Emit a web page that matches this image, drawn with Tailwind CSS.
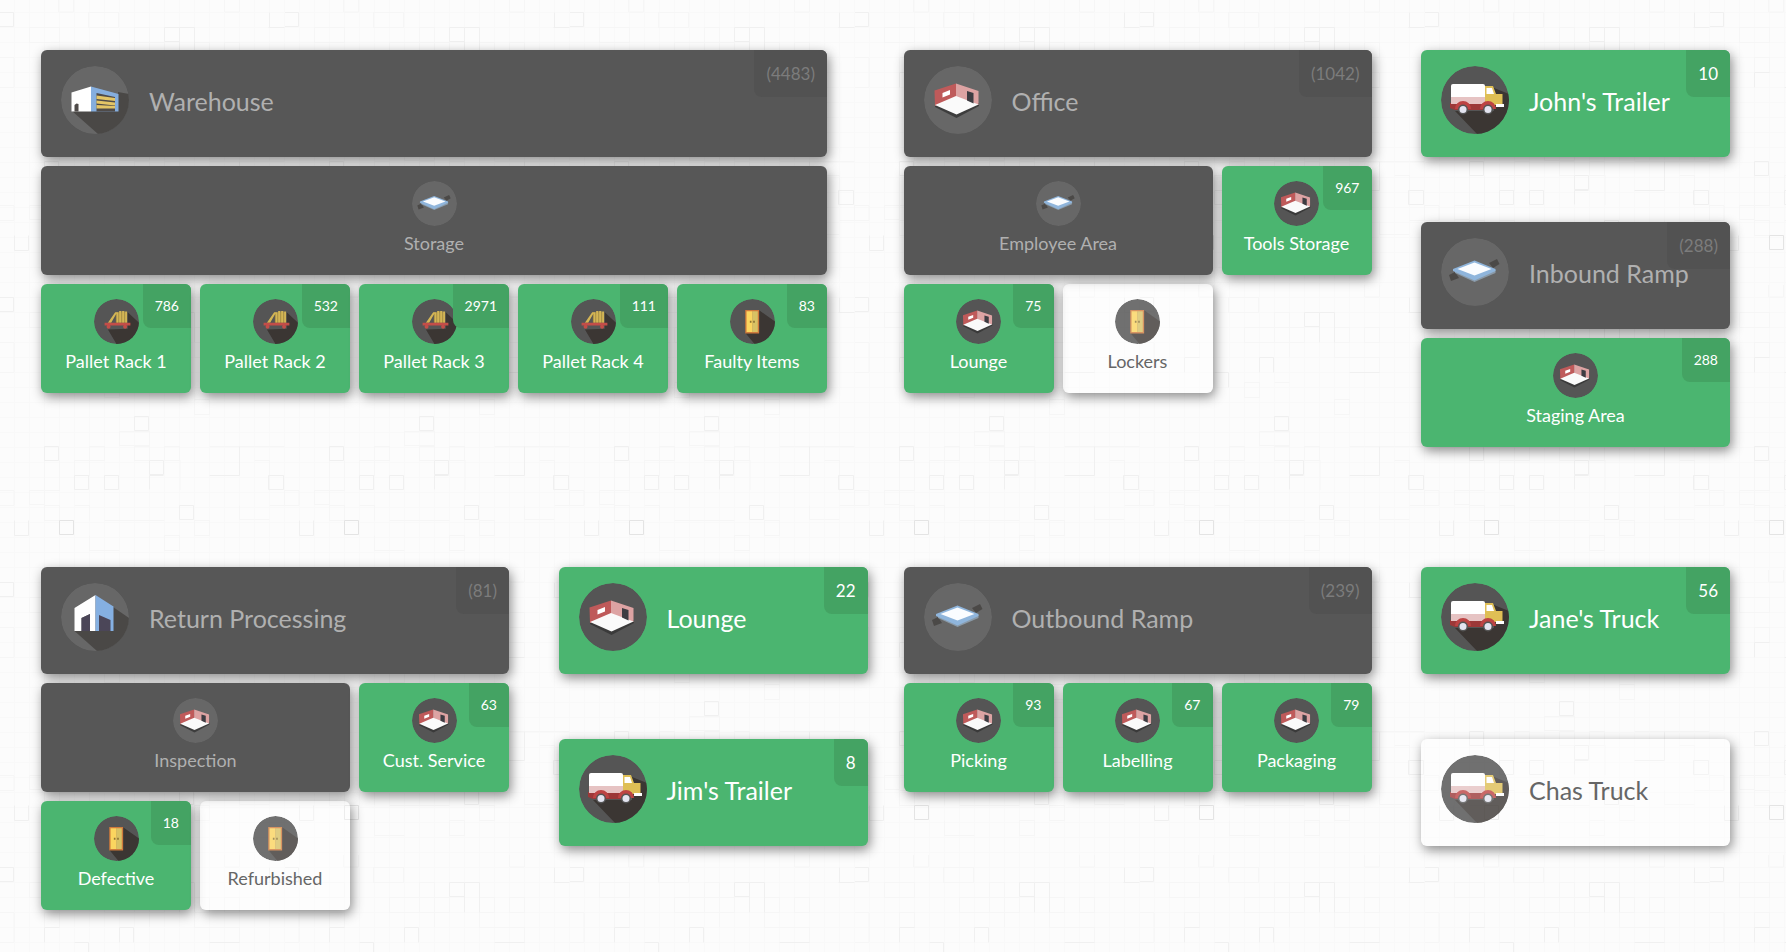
<!DOCTYPE html>
<html lang="en">
<head>
    <meta charset="UTF-8">
    <meta name="viewport" content="width=device-width, initial-scale=1.0">
    <title>Locations</title>
    <script src="https://cdn.jsdelivr.net/npm/@tailwindcss/browser@4"></script>
</head>
<body class="relative min-h-screen bg-[#fcfcfc] font-[Lato,'Open_Sans',sans-serif]">
    <!-- Paper texture -->
    <svg class="absolute inset-0 -z-10 h-full w-full" aria-hidden="true">
        <defs>
            <pattern id="grid" x="-1" y="-3" width="15" height="15" patternUnits="userSpaceOnUse">
                <path d="M0 .5H15M.5 0V15" stroke="#f9f9f9" fill="none"/>
            </pattern>
            <pattern id="paper" width="285" height="285" patternUnits="userSpaceOnUse">
                <g fill="none" stroke="#f6f6f6">
                    <path d="M29.5 27.5h30v15h-30zM104.5 42.5h30v15h-30zM149.5 42.5h15v15h-15zM194.5 42.5h15v15h-15zM224.5 42.5h15v15h-15zM44.5 57.5h15v15h-15zM134.5 27.5h15v15h-15zM0 57.5h14v30h-14M104.5 57.5h45v15M194.5 57.5v15h45v15M58.5 0v12h15v-12M194.5 114.5h15v15h-15zM224.5 0v12h15v-12M88.5 12.5h30v15h-30z"/>
                    <path d="M119.5 146.5h30v14h-30zM74.5 175.5h15v15h-15zM89.5 161.5h15v14h-15zM44.5 175.5v30h15v-30M134.5 161.5h15v14h-15zM164.5 161.5h15v14h-15zM254.5 175.5h15v30M29.5 205.5h15v14h-15zM44.5 220.5h15v15h-15zM74.5 220.5h15v15M104.5 235.5h60M164.5 250.5h15v15h-15zM194.5 235.5h15v15h-15zM89.5 250.5v15h30M209.5 161.5h75M284.5 205.5v15h-15M0 205.5h14v15h-14M314 205.5h-30M104.5 97.5h15v15h-15zM134.5 97.5h15M180 175v30M239.5 220.5v14h30"/>
                </g>
                <g fill="none" stroke="#f0f0f0">
                    <path d="M0 12.5h13.5v14h-14M164.5 27.5h15v14h-15zM179.5 57.5v-30h15M194.5 27.5v30M44.5 87.5v-15h15M119.5 87.5v-15h14v15M74.5 87.5h14v15M209.5 87.5h30M268.5 27.5h16M269.5 12.5v15"/>
                    <path d="M44.5 161.5h14v14h-14zM134.5 131.5h14v14h-14zM149.5 175.5h14v14h-14zM149.5 204.5v-14h14M74.5 190.5h14v14h-14zM104.5 190.5h14v14h-14zM209.5 190.5h30M268.5 190.5h15v14h-15zM239.5 161.5v29M14.5 235.5v15h14v-15M179.5 220.5h14v14h-14z"/>
                </g>
                <path d="M59.5 235.5h14v14h-14z" fill="none" stroke="#e4e4e4"/>
            </pattern>
        </defs>
        <rect width="100%" height="100%" fill="url(#grid)"/>
        <rect width="100%" height="100%" fill="url(#paper)"/>
    </svg>

    <!-- Icon set, each one is cut to a disc by rounded-full where it is used -->
    <svg class="hidden" aria-hidden="true">
        <symbol id="warehouse" viewBox="0 0 68 68">
            <circle cx="34" cy="34" r="34" fill="currentColor"/>
            <path d="M11 45L37 68H68V28L57 26V45Z" fill="#4a4846"/>
            <path d="M10.5 26.5L30 20.5V45.5H10.5Z" fill="#fff"/>
            <path d="M13.5 45.5V39L15.5 37.5L17.5 38V45.5Z" fill="#4f4b49"/>
            <path d="M30 20.5L57.5 28V45.5H30Z" fill="#85aede"/>
            <path d="M35.5 27L54 31V45.5H35.5Z" fill="#4f4b49"/>
            <path d="M35.5 29.5L54 32V35L35.5 33ZM35.5 34.5L54 36.5V39.5L35.5 37.5ZM35.5 39L54 40V42.5H35.5Z" fill="#e3c566"/>
        </symbol>
        <symbol id="house" viewBox="0 0 68 68">
            <circle cx="34" cy="34" r="34" fill="currentColor"/>
            <path d="M13.5 48L36 68H68V35L52 24V48Z" fill="#4a4846"/>
            <path d="M13.5 25L34.5 12V48H29V31L20.5 35V48H13.5Z" fill="#fff"/>
            <path d="M20.5 35L29 31V48H20.5Z" fill="#4b4658"/>
            <path d="M34.5 12L52.5 23.5V48H34.5Z" fill="#85b0e2"/>
            <path d="M38 32L49.5 37V48H38Z" fill="#4b4658"/>
        </symbol>
        <symbol id="room" viewBox="0 0 68 68">
            <circle cx="34" cy="34" r="34" fill="currentColor"/>
            <path d="M11 41L32.5 52L55 40V37H11Z" fill="#333" fill-opacity=".8"/>
            <path d="M10.5 24.5L32 17.5V32L11 40Z" fill="#bf5a5a"/>
            <path d="M32 17.5L54.5 25V39L32 32Z" fill="#dda3a3"/>
            <path d="M11 39L32 30L54.5 38.5L32.5 48.5Z" fill="#fafafa"/>
            <path d="M18.5 27L26 24V28.5L18.5 31.5Z" fill="#fff"/>
            <path d="M43 25L49.5 27V37.5L43 34.5Z" fill="#3d3c42"/>
        </symbol>
        <symbol id="platform" viewBox="0 0 68 68">
            <circle cx="34" cy="34" r="34" fill="currentColor"/>
            <path d="M8 37L14 34L18 40L10 43ZM48 25L56 21L58.5 26L52 30Z" fill="#4b4947"/>
            <path d="M14 35L33.5 44L54.5 35V32H14Z" fill="#8a9aa8"/>
            <path d="M12 31L33.5 22.5L54.5 31V33L33.5 42.5L12 33Z" fill="#8fb5dc"/>
            <path d="M16.5 31L33.5 24.5L50.5 31L33.5 37.5Z" fill="#fafcff"/>
        </symbol>
        <symbol id="truck" viewBox="0 0 68 68">
            <circle cx="34" cy="34" r="34" fill="currentColor"/>
            <path d="M14 45L36 68H68V28L53 22V45Z" fill="#3b3633"/>
            <path d="M9 37H46V44H14L9 42Z" fill="#9c3838"/>
            <path d="M12 18H42Q44 18 44 20V37H10V20Q10 18 12 18Z" fill="#fff"/>
            <path d="M10 31H44V38H10Z" fill="#e6c3c3"/>
            <path d="M44 20H52L55 28H61.5V39H44Z" fill="#dfbf55"/>
            <path d="M45.5 22H51L53 28H45.5Z" fill="#fff"/>
            <path d="M14 43A8 8 0 0 1 30 43ZM39 43A8 8 0 0 1 55 43Z" fill="#bd4343"/>
            <path d="M55 38H63V41H55Z" fill="#fff"/>
            <circle cx="22" cy="43.5" r="5" fill="#555"/>
            <circle cx="22" cy="43.5" r="3.5" fill="#e4e4f0"/>
            <circle cx="47" cy="43.5" r="5" fill="#555"/>
            <circle cx="47" cy="43.5" r="3.5" fill="#e4e4f0"/>
        </symbol>
        <symbol id="rack" viewBox="0 0 68 68">
            <circle cx="34" cy="34" r="34" fill="currentColor"/>
            <path d="M21 46L34 68H68V36L51 20V45Z" fill="#3b3633"/>
            <path d="M33 20H50V36H33Z" fill="#8f7a3c"/>
            <path d="M21 36L32 20H35L26 36ZM34 20H37V36H34ZM38 18H41.5V36H38ZM42.5 18H46V36H42.5ZM47 19H50V36H47Z" fill="#d3b555"/>
            <path d="M16 36H55V40H16Z" fill="#c34d48"/>
            <circle cx="22" cy="42" r="3" fill="#c34d48"/>
            <circle cx="47" cy="42" r="3" fill="#c34d48"/>
        </symbol>
        <symbol id="locker" viewBox="0 0 68 68">
            <circle cx="34" cy="34" r="34" fill="currentColor"/>
            <path d="M23 51L37 68H68V34L44 17V51Z" fill="#3b3633"/>
            <path d="M23 16.5H44V52H23Z" fill="#cf7a3c"/>
            <path d="M25 18.5H33.5V50H25Z" fill="#fbd55f"/>
            <path d="M33.5 18.5H42V50H33.5Z" fill="#d8c264"/>
            <path d="M30 33H32.5V36H30ZM35 33H37.5V36H35Z" fill="#8d7434"/>
        </symbol>
    </svg>

    <main id="board" class="grid grid-cols-10 gap-y-[120px] pt-[50px] pr-5 pb-10 pl-[41px]"></main>

    <script>
        // Each group: grid span and a stack of locations, each location with its child tiles.
        // state: full = has items, parent = only its children have items, empty = nothing inside
        const groups = [
            { span: 5, stack: [
                { name: 'Warehouse', icon: 'warehouse', state: 'parent', count: '(4483)', tiles: [
                    { name: 'Storage', icon: 'platform', state: 'parent', cols: 5 },
                    { name: 'Pallet Rack 1', icon: 'rack', state: 'full', count: '786' },
                    { name: 'Pallet Rack 2', icon: 'rack', state: 'full', count: '532' },
                    { name: 'Pallet Rack 3', icon: 'rack', state: 'full', count: '2971' },
                    { name: 'Pallet Rack 4', icon: 'rack', state: 'full', count: '111' },
                    { name: 'Faulty Items', icon: 'locker', state: 'full', count: '83' },
                ] },
            ] },
            { span: 3, stack: [
                { name: 'Office', icon: 'room', state: 'parent', count: '(1042)', tiles: [
                    { name: 'Employee Area', icon: 'platform', state: 'parent', cols: 2 },
                    { name: 'Tools Storage', icon: 'room', state: 'full', count: '967' },
                    { name: 'Lounge', icon: 'room', state: 'full', count: '75' },
                    { name: 'Lockers', icon: 'locker', state: 'empty' },
                ] },
            ] },
            { span: 2, stack: [
                { name: "John's Trailer", icon: 'truck', state: 'full', count: '10' },
                { name: 'Inbound Ramp', icon: 'platform', state: 'parent', count: '(288)', tiles: [
                    { name: 'Staging Area', icon: 'room', state: 'full', count: '288', cols: 2 },
                ] },
            ] },
            { span: 3, stack: [
                { name: 'Return Processing', icon: 'house', state: 'parent', count: '(81)', tiles: [
                    { name: 'Inspection', icon: 'room', state: 'parent', cols: 2 },
                    { name: 'Cust. Service', icon: 'room', state: 'full', count: '63' },
                    { name: 'Defective', icon: 'locker', state: 'full', count: '18' },
                    { name: 'Refurbished', icon: 'locker', state: 'empty' },
                ] },
            ] },
            { span: 2, stack: [
                { name: 'Lounge', icon: 'room', state: 'full', count: '22' },
                { name: "Jim's Trailer", icon: 'truck', state: 'full', count: '8' },
            ] },
            { span: 3, stack: [
                { name: 'Outbound Ramp', icon: 'platform', state: 'parent', count: '(239)', tiles: [
                    { name: 'Picking', icon: 'room', state: 'full', count: '93' },
                    { name: 'Labelling', icon: 'room', state: 'full', count: '67' },
                    { name: 'Packaging', icon: 'room', state: 'full', count: '79' },
                ] },
            ] },
            { span: 2, stack: [
                { name: "Jane's Truck", icon: 'truck', state: 'full', count: '56' },
                { name: 'Chas Truck', icon: 'truck', state: 'empty' },
            ] },
        ];

        const spanClass = { 2: 'col-span-2', 3: 'col-span-3', 5: 'col-span-5' };
        const gridClass = {
            2: 'grid grid-cols-[repeat(2,150px)] gap-[9px]',
            3: 'grid grid-cols-[repeat(3,150px)] gap-[9px]',
            5: 'grid grid-cols-[repeat(5,150px)] gap-[9px]',
        };
        const cardClass = {
            full: 'bg-[#4bb570] text-white',
            parent: 'bg-[#575757] text-[#b0b0b0]',
            empty: 'bg-white/30 text-[#666]',
        };
        const iconClass = {
            full: 'text-[#555]',
            parent: 'text-[#676767]',
            empty: 'text-[#4d4d4d] opacity-80',
        };
        const badgeClass = {
            full: 'bg-[#44a363]',
            parent: 'bg-[#525252] text-[#7c7c7c]',
        };
        const shadow = 'shadow-[2px_4px_12px_rgba(0,0,0,0.45)]';

        function badge(item, size) {
            if (!item.count) return '';
            return `<span class="absolute top-0 right-0 rounded-tr-md rounded-bl-lg px-3 ${size} ${badgeClass[item.state]}">${item.count}</span>`;
        }

        function header(item) {
            return `
                <a href="#" class="relative col-span-full flex h-[107px] items-start gap-5 rounded-md px-5 pt-4 ${shadow} ${cardClass[item.state]}">
                    <svg class="size-[68px] shrink-0 rounded-full ${iconClass[item.state]}"><use href="#${item.icon}"/></svg>
                    <h2 class="text-[25px] leading-[70px] whitespace-nowrap">${item.name}</h2>
                    ${badge(item, 'text-[17px] leading-[47px]')}
                </a>`;
        }

        function tile(item) {
            return `
                <a href="#" class="relative flex h-[109px] flex-col items-center rounded-md pt-[15px] ${shadow} ${spanClass[item.cols] || ''} ${cardClass[item.state]}">
                    <svg class="size-[45px] rounded-full ${iconClass[item.state]}"><use href="#${item.icon}"/></svg>
                    <span class="mt-[3px] text-lg leading-7 whitespace-nowrap">${item.name}</span>
                    ${badge(item, 'text-sm leading-[44px]')}
                </a>`;
        }

        document.getElementById('board').innerHTML = groups.map(group => `
            <section class="flex flex-col gap-[65px] ${spanClass[group.span]}">
                ${group.stack.map(item => `
                    <div class="${gridClass[group.span]}">
                        ${header(item)}
                        ${(item.tiles || []).map(tile).join('')}
                    </div>`).join('')}
            </section>`).join('');
    </script>
</body>
</html>
